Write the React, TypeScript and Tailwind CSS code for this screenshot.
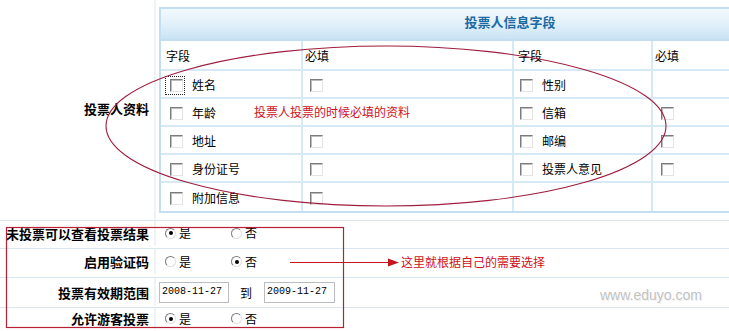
import React from "react";

const Cb = () => (
  <span className="inline-block w-[13px] h-[13px] shrink-0 bg-white border border-t-[#7c7c7c] border-l-[#7c7c7c] border-b-[#e4e4e4] border-r-[#e4e4e4] shadow-[inset_1px_1px_0_#bdbdbd]" />
);

const Radio = ({ on }: { on?: boolean }) => (
  <span className="inline-flex items-center justify-center w-[11px] h-[11px] shrink-0 rounded-full bg-white border border-t-[#7c7c7c] border-l-[#7c7c7c] border-b-[#e0e0e0] border-r-[#e0e0e0]">
    {on ? <span className="block w-[4px] h-[4px] rounded-full bg-black" /> : null}
  </span>
);

type Cell = { cb?: boolean; label?: string; focus?: boolean } | null;

const rows: Cell[][] = [
  [{ cb: true, label: "姓名", focus: true }, { cb: true }, { cb: true, label: "性别" }, null],
  [{ cb: true, label: "年龄" }, null, { cb: true, label: "信箱" }, { cb: true }],
  [{ cb: true, label: "地址" }, { cb: true }, { cb: true, label: "邮编" }, { cb: true }],
  [{ cb: true, label: "身份证号" }, { cb: true }, { cb: true, label: "投票人意见" }, { cb: true }],
  [{ cb: true, label: "附加信息" }, { cb: true }, null, null],
];

const pads = ["pl-[9px]", "pl-[7px]", "pl-[6px]", "pl-[8px]"];

const RadioPair = ({ yes }: { yes: boolean }) => (
  <div className="flex items-center pl-[9px]">
    <span className="flex items-center w-[66px]">
      <Radio on={yes} />
      <span className="ml-[3px]">是</span>
    </span>
    <span className="flex items-center">
      <Radio on={!yes} />
      <span className="ml-[3px]">否</span>
    </span>
  </div>
);

const Label = ({ children, extra = "" }: { children: React.ReactNode; extra?: string }) => (
  <div className={`w-[156px] shrink-0 border-r-2 border-[#eef3f7] flex items-center justify-end pr-[5px] font-bold text-[13px] whitespace-nowrap ${extra}`}>
    {children}
  </div>
);

export default function App() {
  return (
    <div className="relative w-[729px] h-[331px] overflow-hidden bg-white text-[12px] leading-none text-black font-['Noto_Sans_CJK_SC','Noto_Sans',sans-serif]">
      <div className="flex h-[220px]">
        <Label extra="pb-[4px]">投票人资料</Label>
        <div className="pt-[7px] pl-[3px]">
          <div className="w-[702px] border-2 border-[#c2def0] bg-white">
            <div className="h-[32px] pb-[5px] border-b-2 border-[#c2def0] bg-gradient-to-b from-[#f2f9fd] via-[#e2f0fa] to-[#c9e3f4] flex items-center justify-center font-bold text-[13px] text-[#1c6aa3]">
              投票人信息字段
            </div>
            <div className="grid grid-cols-[142px_211px_139px_1fr] h-[30px] border-b-2 border-[#d6e9f5]">
              <div className="border-r-2 border-[#d6e9f5] flex items-center pl-[5px] pt-[2px]">字段</div>
              <div className="border-r-2 border-[#d6e9f5] flex items-center pl-[2px] pt-[2px]">必填</div>
              <div className="border-r-2 border-[#d6e9f5] flex items-center pl-[4px] pt-[2px]">字段</div>
              <div className="flex items-center pl-[2px] pt-[2px]">必填</div>
            </div>
            {rows.map((r, i) => (
              <div
                key={i}
                className={`grid grid-cols-[142px_211px_139px_1fr] h-[28px] ${i < rows.length - 1 ? "border-b-2 border-[#d6e9f5]" : ""}`}
              >
                {r.map((c, j) => (
                  <div
                    key={j}
                    className={`flex items-center pt-[2px] ${j < 3 ? "border-r-2 border-[#d6e9f5]" : ""} ${c && c.focus ? "pl-[4px]" : pads[j]}`}
                  >
                    {c && c.cb ? (
                      c.focus ? (
                        <span className="inline-flex border border-dotted border-[#222] pl-[4px] pr-[1px] py-[2px]">
                          <Cb />
                        </span>
                      ) : (
                        <Cb />
                      )
                    ) : null}
                    {c && c.label ? (
                      <span className={c.focus ? "ml-[7px]" : "ml-[9px]"}>{c.label}</span>
                    ) : null}
                  </div>
                ))}
              </div>
            ))}
          </div>
        </div>
      </div>

      <div className="flex h-[28px] pb-[3px] border-t border-[#d8e6f0]">
        <Label>未投票可以查看投票结果</Label>
        <RadioPair yes={true} />
      </div>
      <div className="flex h-[29px] pb-[3px] border-t border-[#d8e6f0]">
        <Label>启用验证码</Label>
        <RadioPair yes={false} />
      </div>
      <div className="flex h-[30px] pb-[1px] border-t border-[#d8e6f0]">
        <Label>投票有效期范围</Label>
        <div className="flex items-center pl-[3px]">
          <div className="w-[70px] h-[21px] border border-[#b9bdc1] flex items-center pl-[2px] font-['Liberation_Mono',monospace] text-[10px]">
            2008-11-27
          </div>
          <span className="ml-[11px] pt-[2px]">到</span>
          <div className="ml-[12px] w-[71px] h-[21px] border border-[#b9bdc1] flex items-center pl-[2px] font-['Liberation_Mono',monospace] text-[10px]">
            2009-11-27
          </div>
        </div>
      </div>
      <div className="flex h-[30px] pb-[8px] border-t border-[#d8e6f0]">
        <Label>允许游客投票</Label>
        <RadioPair yes={true} />
      </div>

      {/* annotations */}
      <svg className="absolute left-0 top-0 pointer-events-none" width={729} height={331}>
        <ellipse cx={386} cy={126} rx={280} ry={80} fill="none" stroke="#9e1d3d" strokeWidth={1.1} />
        <rect x={6.5} y={227.5} width={337} height={100} fill="none" stroke="#b81f33" strokeWidth={1.2} />
        <line x1={290} y1={262.5} x2={392} y2={262.5} stroke="#c4161c" strokeWidth={1.2} />
        <polygon points="388,258.5 399,262.5 388,266.5" fill="#c4161c" />
      </svg>
      <div className="absolute left-[254px] top-[106px] text-[12px] text-[#d0101a] whitespace-nowrap">
        投票人投票的时候必填的资料
      </div>
      <div className="absolute left-[401px] top-[256px] text-[12px] text-[#d0101a] whitespace-nowrap">
        这里就根据自己的需要选择
      </div>
      <div className="absolute left-[600px] top-[288px] text-[14px] text-[#c2c2c2] font-['Liberation_Sans',sans-serif] [text-shadow:0_0_2px_#fff,0_0_3px_#fff,1px_1px_1px_#e8e8e8] whitespace-nowrap">
        www.eduyo.com
      </div>
    </div>
  );
}
